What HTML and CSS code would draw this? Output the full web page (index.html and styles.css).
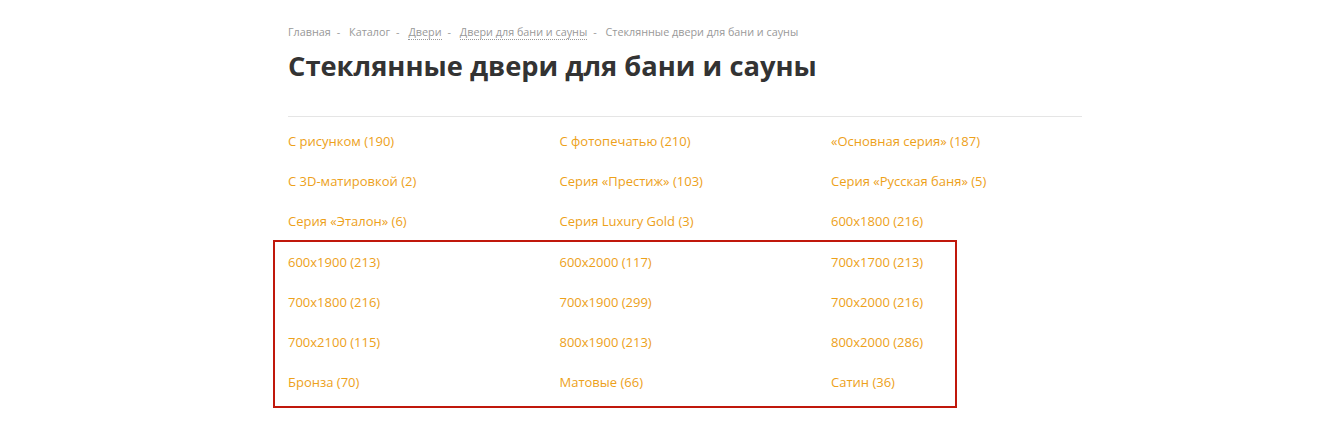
FILE: index.html
```html
<!DOCTYPE html>
<html lang="ru">
<head>
    <meta charset="UTF-8">
    <title>Стеклянные двери для бани и сауны</title>
    <link rel="stylesheet" href="styles.css">
</head>
<body>
    <div class="page">
        <div class="breadcrumbs">
            <span>Главная</span><i>-</i>
            <span>Каталог</span><i>-</i>
            <a href="#">Двери</a><i>-</i>
            <a href="#">Двери для бани и сауны</a><i>-</i>
            <span>Стеклянные двери для бани и сауны</span>
        </div>
        <h1>Стеклянные двери для бани и сауны</h1>
        <hr>
        <div class="sections">
            <div class="highlight"></div>
            <a href="#">С рисунком (190)</a>
            <a href="#">С фотопечатью (210)</a>
            <a href="#">«Основная серия» (187)</a>
            <a href="#">С 3D-матировкой (2)</a>
            <a href="#">Серия «Престиж» (103)</a>
            <a href="#">Серия «Русская баня» (5)</a>
            <a href="#">Серия «Эталон» (6)</a>
            <a href="#">Серия Luxury Gold (3)</a>
            <a href="#">600x1800 (216)</a>
            <a href="#">600x1900 (213)</a>
            <a href="#">600x2000 (117)</a>
            <a href="#">700x1700 (213)</a>
            <a href="#">700x1800 (216)</a>
            <a href="#">700x1900 (299)</a>
            <a href="#">700x2000 (216)</a>
            <a href="#">700x2100 (115)</a>
            <a href="#">800x1900 (213)</a>
            <a href="#">800x2000 (286)</a>
            <a href="#">Бронза (70)</a>
            <a href="#">Матовые (66)</a>
            <a href="#">Сатин (36)</a>
        </div>
    </div>
</body>
</html>
```

FILE: styles.css
```css
body {
    margin: 0;
    background: #fff;
    font-family: "Open Sans", "Noto Sans", sans-serif;
    color: #333;
}
.page {
    width: 794px;
    margin: 0 0 0 288px;
    padding-top: 24px;
}
.breadcrumbs {
    font-size: 10.8px;
    line-height: 15px;
    color: #999;
}
.breadcrumbs i {
    font-style: normal;
    margin: 0 6px;
}
.breadcrumbs a {
    color: #999;
    text-decoration: none;
    border-bottom: 1px dotted #999;
}
h1 {
    margin: 9px 0 0;
    font-size: 27.3px;
    line-height: 35px;
    font-weight: 700;
    color: #333;
}
hr {
    margin: 33px 0 0;
    border: none;
    border-top: 1px solid #e5e5e5;
}
.sections {
    position: relative;
    display: grid;
    grid-template-columns: 271.5px 271.5px 251px;
    grid-auto-rows: 40.2px;
    padding-top: 14px;
}
.sections a {
    font-size: 13px;
    line-height: 20px;
    color: #eda11a;
    text-decoration: none;
}
.highlight {
    position: absolute;
    left: -15px;
    top: 123px;
    width: 680px;
    height: 164px;
    border: 2px solid #c0180c;
}
```
